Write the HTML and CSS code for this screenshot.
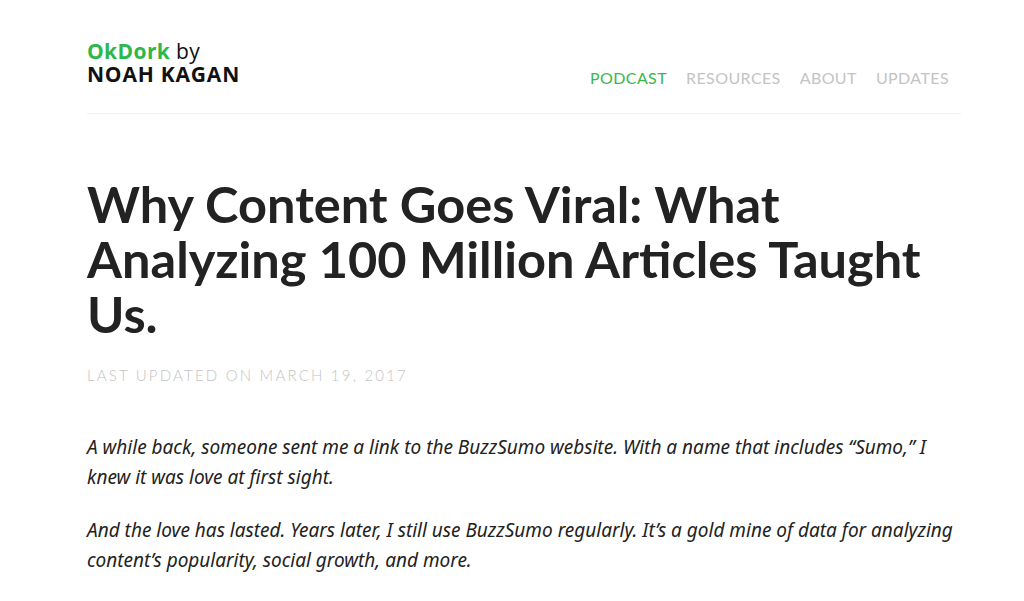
FILE: index.html
```html
<!DOCTYPE html>
<html lang="en">
<head>
  <meta charset="UTF-8" />
  <title>Why Content Goes Viral | OkDork</title>
  <link rel="stylesheet" href="styles.css">
</head>
<body>
  <div class="wrap">
    <!-- Site header -->
    <header class="site-header">
      <a class="logo" href="#">
        <span class="logo-top"><span class="logo-green">OkDork</span> by</span>
        <span class="logo-name">NOAH KAGAN</span>
      </a>
      <nav class="nav">
        <a class="nav-link active" href="#">PODCAST</a>
        <a class="nav-link" href="#">RESOURCES</a>
        <a class="nav-link" href="#">ABOUT</a>
        <a class="nav-link" href="#">UPDATES</a>
      </nav>
    </header>

    <!-- Article -->
    <article class="post">
      <h1 class="post-title">Why Content Goes Viral: What Analyzing 100 Million Articles Taught Us.</h1>
      <div class="post-meta">Last updated on March 19, 2017</div>
      <div class="post-body">
        <p><em>A while back, someone sent me a link to the BuzzSumo website. With a name that includes “Sumo,” I knew it was love at first sight.</em></p>
        <p><em>And the love has lasted. Years later, I still use BuzzSumo regularly. It’s a gold mine of data for analyzing content’s popularity, social growth, and more.</em></p>
      </div>
    </article>
  </div>
</body>
</html>
```

FILE: styles.css
```css
/* RESET & BASE */
* {
  margin: 0;
  padding: 0;
  box-sizing: border-box;
}
body {
  font-family: Lato, "Open Sans", sans-serif;
  background: #fff;
  color: #222;
}
a {
  text-decoration: none;
}
.wrap {
  width: 874px;
  margin-left: 87px;
}
/* HEADER */
.site-header {
  display: flex;
  justify-content: space-between;
  align-items: flex-end;
  padding-top: 40px;
  padding-bottom: 25px;
  border-bottom: 1px solid #f0f0f0;
}
.logo {
  display: flex;
  flex-direction: column;
  gap: 1px;
  margin-bottom: 3px;
  font-family: "Open Sans", sans-serif;
  font-size: 21px;
  line-height: 22px;
  letter-spacing: 0.4px;
  color: #111;
}
.logo-top {
  font-weight: 400;
}
.logo-green {
  color: #2db84b;
  font-weight: 700;
}
.logo-name {
  font-weight: 700;
  letter-spacing: 0.8px;
}
.nav {
  display: flex;
  gap: 19px;
  padding-right: 12px;
}
.nav-link {
  font-size: 16px;
  line-height: 20px;
  font-weight: 400;
  letter-spacing: 0.4px;
  color: #c4c4c4;
}
.nav-link.active {
  color: #3cb54a;
}
/* POST */
.post-title {
  margin-top: 62px;
  font-size: 50.5px;
  line-height: 55px;
  font-weight: 700;
  color: #222;
}
.post-meta {
  margin-top: 25px;
  font-size: 15px;
  font-weight: 300;
  letter-spacing: 2.2px;
  text-transform: uppercase;
  color: #c4c4c4;
}
.post-body {
  margin-top: 48px;
}
.post-body p {
  font-family: "Noto Sans", sans-serif;
  font-size: 19px;
  line-height: 30px;
  color: #222;
  margin-bottom: 23px;
}
```
